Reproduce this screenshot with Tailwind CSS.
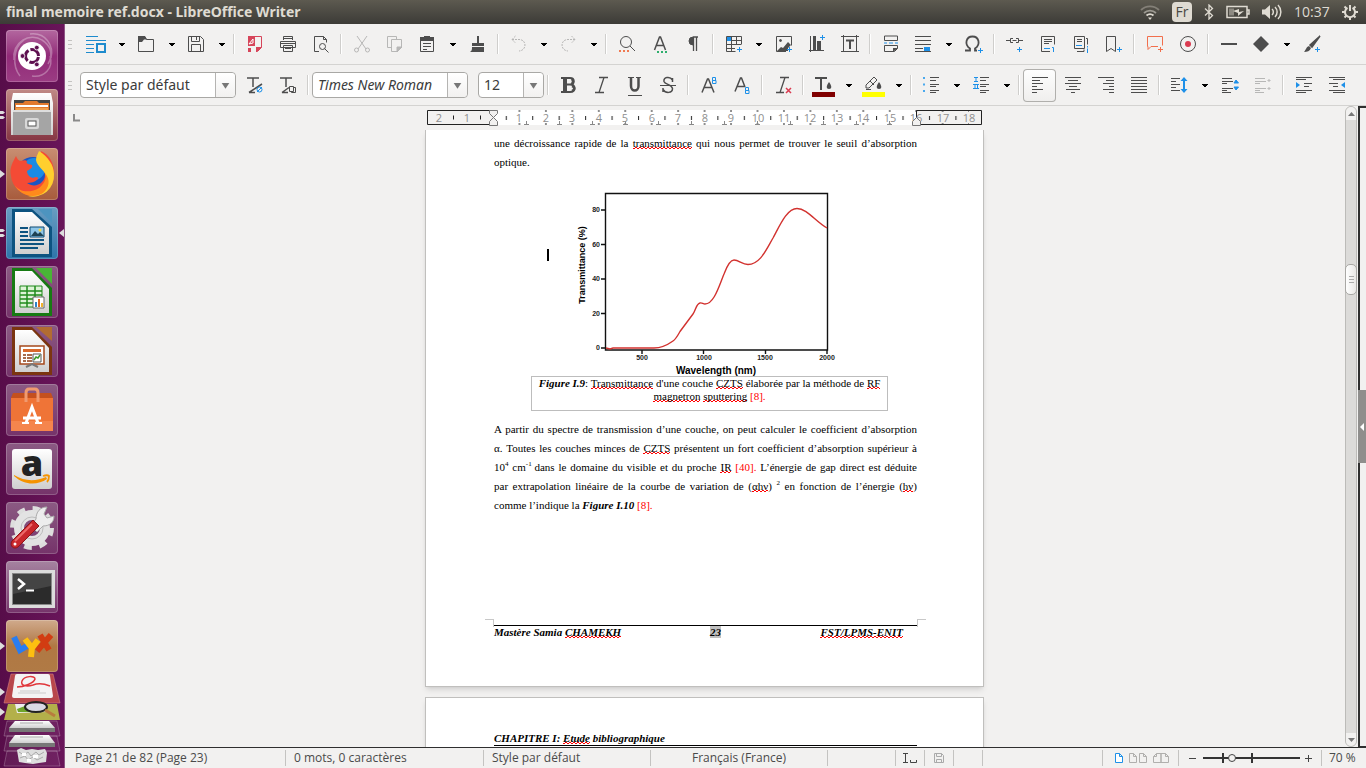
<!DOCTYPE html>
<html lang="fr">
<head>
  <meta charset="UTF-8">
  <meta name="viewport" content="width=device-width, initial-scale=1.0">
  <title>final memoire ref.docx - LibreOffice Writer</title>
  <script src="https://cdn.jsdelivr.net/npm/@tailwindcss/browser@4"></script>
</head>
<body class="h-screen overflow-hidden flex flex-col bg-[#f2f1f0] text-[#3c3c3c] font-['Open_Sans','Noto_Sans',sans-serif]">

  <!-- Shared symbols -->
  <svg class="absolute size-0" aria-hidden="true">
    <symbol id="caret" viewBox="0 0 17 24"><path d="M6 11h6v1h-1v1h-1v1H8v-1H7v-1H6z" fill="#000"/></symbol>
    <symbol id="combo" viewBox="0 0 20 24"><path d="M6 10h8l-4 6z" fill="#777"/></symbol>
    <symbol id="run" viewBox="0 0 6 10"><path d="M0 1l5 4-5 4z" fill="#ddd"/></symbol>
    <symbol id="runs" viewBox="0 0 6 10"><path d="M0 1h3l2 1.500-2 1.500H0zM0 6h3l2 1.500L3 9H0z" fill="#ddd"/></symbol>
    <linearGradient id="shine" x1="0" y1="0" x2="0" y2="1"><stop offset="0" stop-color="#fff"/><stop offset="1" stop-color="#cfcfcf"/></linearGradient>
  </svg>

  <!-- Top panel -->
  <header class="h-6 shrink-0 flex items-center justify-between pl-[6px] pr-2 bg-linear-to-b from-[#5d5a50] to-[#3c3b37] text-[#dfdbd2]">
    <h1 class="text-[14px] leading-6 font-bold font-['Noto_Sans',sans-serif]">final memoire ref.docx - LibreOffice Writer</h1>
    <div class="flex items-center gap-3">
      <svg class="w-5 h-5" viewBox="0 0 20 20" fill="none" stroke="#dfdbd2" stroke-width="1.800">
        <path d="M1 8a13 13 0 0 1 18 0" opacity=".35"/><path d="M4 11a9 9 0 0 1 12 0" opacity=".55"/><path d="M6.500 13.500a5.500 5.500 0 0 1 7 0"/><path d="M8 15.500h4L10 18z" fill="#dfdbd2" stroke="none"/>
      </svg>
      <span class="w-5 h-5 rounded-sm bg-[#dfdbd2] text-[#4a4843] text-[14px] leading-5 text-center">Fr</span>
      <svg class="w-[10px] h-4" viewBox="0 0 10 16" fill="none" stroke="#dfdbd2" stroke-width="1.300"><path d="M1 4.500l7.500 7L5 15V1l3.500 3.500L1 11.500"/></svg>
      <svg class="w-6 h-4" viewBox="0 0 24 16" fill="none" stroke="#dfdbd2" stroke-width="1.500">
        <path d="M1 2.500h20v11H1zM21 6h2v4h-2"/><path d="M3 4.500h5v7H3z" fill="#8d8a82" stroke="none"/><path d="M7 7l6-2v3l5-1-6 5V9z" fill="#dfdbd2" stroke="none"/>
      </svg>
      <svg class="w-5 h-4" viewBox="0 0 20 16" fill="none" stroke="#dfdbd2" stroke-width="1.500">
        <path d="M0 5.500h3L8 1v14l-5-4.500H0z" fill="#dfdbd2" stroke="none"/><path d="M10 5a4 4 0 0 1 0 6M13 3a7 7 0 0 1 0 10M16 1a10 10 0 0 1 0 14"/>
      </svg>
      <time class="w-9 text-[14px] leading-6">10:37</time>
      <svg class="size-4" viewBox="0 0 16 16" fill="none" stroke="#dfdbd2">
        <path d="M10.500 3.800a5 5 0 1 1-5 0" stroke-width="2"/><path d="M8 1v6" stroke-width="2"/>
        <path d="M2.500 2.500l2 2M13.500 2.500l-2 2M0 8h3M13 8h3M2.500 13.500l2-2M13.500 13.500l-2-2M8 13v3" stroke-width="2"/>
      </svg>
    </div>
  </header>

  <div class="flex-1 min-h-0 flex">

    <!-- Launcher -->
    <nav class="w-[65px] shrink-0 flex flex-col pt-[6px] bg-linear-to-r from-[#570d49] to-[#69155a] border-r border-[#8d5484] overflow-hidden">
      <ul class="flex flex-col gap-[7px] [&>li]:relative [&>li]:h-[52px] [&_button]:block [&_button]:ml-[6px] [&_button]:size-[52px] [&_button]:rounded-[4px] [&_button]:inset-ring [&_button]:inset-ring-white/20 [&_button>svg]:size-[52px] [&_button>svg]:overflow-visible">
        <li><button aria-label="Dash" class="bg-linear-to-b from-[#b3679f] via-[#912a78] to-[#9b3c83]">
          <svg viewBox="0 0 52 52" fill="none">
            <path d="M8 30C6 12 24 2 36 10c8 5 12 14 6 24M14 46C6 36 7 18 18 10M44 26c4 12-6 22-18 20M24 4c16-2 24 12 21 24" stroke="#fff" stroke-opacity=".3" stroke-width="1.500"/>
            <circle cx="26" cy="26" r="14" fill="#fff"/>
            <circle cx="26" cy="26" r="6.500" stroke="#5e1050" stroke-width="3" stroke-dasharray="11.600 2" stroke-dashoffset="-1"/>
            <g fill="#5e1050" stroke="#fff" stroke-width=".8"><circle cx="16.500" cy="26" r="2.400"/><circle cx="30.800" cy="17.600" r="2.400"/><circle cx="30.800" cy="34.400" r="2.400"/></g>
          </svg></button></li>
        <li><svg class="absolute left-0 top-[21px] w-[6px] h-[10px]"><use href="#runs"/></svg>
          <button aria-label="Fichiers" class="bg-linear-to-b from-[#c08a86] to-[#853543]">
          <svg viewBox="0 0 52 52">
            <path d="M7 4h38l2 10v32H5V14z" fill="url(#shine)"/><path d="M8 11h36v12H8z" fill="#444"/>
            <path d="M9 14h8l2-2h12l2 2h10v9H9z" fill="#e27a2e"/><path d="M10 16h32v2H10z" fill="#fff"/><path d="M10 19h32v3H10z" fill="#f0a04e"/>
            <path d="M7 21h38v25H7z" fill="#a5a5a5"/><path d="M7 21h38v2H7z" fill="#ddd"/><rect x="19" y="29" width="14" height="11" rx="2" fill="#d8d8d8"/><rect x="22" y="32" width="8" height="5" fill="#fff" stroke="#555"/>
          </svg></button></li>
        <li><svg class="absolute left-0 top-[21px] w-[6px] h-[10px]"><use href="#run"/></svg>
          <button aria-label="Firefox" class="bg-linear-to-b from-[#c88e72] to-[#a75b3c]">
          <svg viewBox="0 0 52 52">
            <circle cx="27" cy="26" r="17" fill="#1a55c4"/><circle cx="28" cy="21" r="11" fill="#1b8be4"/>
            <path d="M10 8c1 3 3 5 5 5 2-1 5-1 6 0-1 2 0 3 5 4 1 3-2 4-5 6 0 3 2 6 6 7 3-2 6-1 5 1-3 3-7 4-11 4 8 6 18 0 18-8 0-6-6-9-6-15 0-5 3-8 2-9 9 4 13 13 13 21a21 21 0 0 1-43 4C3 20 7 14 10 8z" fill="#f44b35"/>
            <path d="M33 3c9 6 15 14 15 23a21 21 0 0 1-26 22c12-2 19-9 18-20-1-6-9-9-10-16 0-4 2-6 3-9z" fill="#ffcf2e"/>
            <path d="M8 36c5 9 17 9 25 4 5-4 8-9 6-15 6 7 4 15-2 20-9 6-23 3-29-9z" fill="#ff8a1c"/>
          </svg></button></li>
        <li><svg class="absolute left-0 top-[21px] w-[6px] h-[10px]"><use href="#runs"/></svg>
          <svg class="absolute right-0 top-[21px] w-[6px] h-[10px]" viewBox="0 0 6 10"><path d="M6 1L1 5l5 4z" fill="#ddd"/></svg>
          <button aria-label="LibreOffice Writer" class="bg-linear-to-b from-[#6a9dc2] to-[#2c75aa]">
          <svg viewBox="0 0 52 52">
            <path d="M6 2h20l20 18v30H6z" fill="#0d5380"/><path d="M32 2h14v14z" fill="#4d94bf"/><path d="M9 5h17l17 16v26H9z" fill="url(#shine)"/>
            <path d="M14 21h8M14 25h8M14 29h8M14 33h24M14 37h24M14 41h18" stroke="#0d5380" stroke-width="2"/>
            <path d="M24 20h14v10H24z" fill="#8ec6e8" stroke="#0d4a72"/><path d="M25 29l4-5 3 3 2-2 4 4z" fill="#1d4252"/><circle cx="34" cy="23" r="1.500" fill="#f6d743"/>
          </svg></button></li>
        <li><button aria-label="LibreOffice Calc" class="bg-linear-to-b from-[#8b5a83] to-[#75336a]">
          <svg viewBox="0 0 52 52">
            <path d="M6 2h20l20 20v28H6z" fill="#177a13"/><path d="M30 2h16v16z" fill="#49b536"/><path d="M9 5h17l17 18v24H9z" fill="url(#shine)"/>
            <path d="M14 20h22v21H14z" fill="#ddf3d6" stroke="#1f8a1b"/><path d="M14 25h22M14 29h22M14 33h22M14 37h22M21 20v21M29 20v21" stroke="#1f8a1b" stroke-width="1.500"/>
            <path d="M27 31h11v11H27z" fill="#fff" stroke="#666"/><path d="M29 36h2v5h-2z" fill="#2f80c8"/><path d="M32 33h2v8h-2z" fill="#e2661e"/><path d="M35 37h2v4h-2z" fill="#f0b32c"/>
          </svg></button></li>
        <li><button aria-label="LibreOffice Impress" class="bg-linear-to-b from-[#8b5a83] to-[#75336a]">
          <svg viewBox="0 0 52 52">
            <path d="M6 2h20l20 20v28H6z" fill="#7b3510"/><path d="M30 2h16v14z" fill="#b26c31"/><path d="M9 5h17l17 18v24H9z" fill="url(#shine)"/>
            <path d="M14 21h24v18H14z" fill="#fff" stroke="#a5481b" stroke-width="1.500"/><path d="M17 24h18v3H17z" fill="#d9692b"/><path d="M17 30h3M17 33h3M17 36h3M21 30h5M21 33h5M21 36h5" stroke="#8a3d13" stroke-width="1.500"/><path d="M27 29h8v8h-8z" fill="#fff" stroke="#555"/><path d="M28 35l2-3 2 1 2-3" stroke="#3a9b2a" stroke-width="1.500" fill="none"/><path d="M20 42l6-3 6 3" stroke="#777" stroke-width="2" fill="none"/>
          </svg></button></li>
        <li><button aria-label="Logiciels" class="bg-linear-to-b from-[#8b5a83] to-[#75336a]">
          <svg viewBox="0 0 52 52">
            <path d="M7 9l-2 5h42l-2-5z" fill="#c4501e"/><path d="M5 14h42v33H5z" fill="#ef7437"/><path d="M5 37h42v10H5z" fill="#f5854d"/>
            <path d="M20 18V9q0-4 3-4h6q3 0 3 4v9" fill="none" stroke="#f09a70" stroke-width="3"/>
            <path d="M20 39l6-16 6 16M17 34h18" fill="none" stroke="#fff" stroke-width="3"/><path d="M16 39h7M29 39h7" stroke="#fff" stroke-width="2"/>
          </svg></button></li>
        <li><button aria-label="Amazon" class="bg-linear-to-b from-[#8b5a83] to-[#75336a]">
          <svg viewBox="0 0 52 52">
            <rect x="6" y="6" width="40" height="40" rx="3" fill="url(#shine)"/>
            <text x="26" y="33" text-anchor="middle" font-family="Open Sans, sans-serif" font-weight="800" font-size="36" fill="#222">a</text>
            <path d="M8 33c11 10 24 9 33 3l-1-2c-9 4-21 5-32-2z" fill="#f59300"/><path d="M37 33c3-1 5-1 6 0 0 2 0 4-2 6" fill="none" stroke="#f59300" stroke-width="1.800"/>
          </svg></button></li>
        <li><button aria-label="Paramètres système" class="bg-linear-to-b from-[#8b5a83] to-[#75336a]">
          <svg viewBox="0 0 52 52">
            <circle cx="26" cy="26" r="19.500" fill="none" stroke="#ddd" stroke-width="5" stroke-dasharray="7.660 7.660"/>
            <circle cx="26" cy="26" r="13" fill="none" stroke="#e3e3e3" stroke-width="10"/><circle cx="26" cy="26" r="11" fill="none" stroke="#bdbdbd"/>
            <path d="M30 17c0-7 4-12 11-12l-3 7 3 4 7-2c0 7-5 10-11 10l-6 6-6-6z" fill="#ededed" stroke="#aaa"/>
            <path d="M27 18l6 6-21 21c-4 3-9-1-6-6z" fill="#c9272c" stroke="#8f1519"/><path d="M26 22L9 39" stroke="#ee6a6a" stroke-width="2"/><circle cx="9" cy="42" r="1.500" fill="#fff"/>
          </svg></button></li>
        <li><button aria-label="Terminal" class="bg-linear-to-b from-[#a583a0] to-[#75336a]">
          <svg viewBox="0 0 52 52">
            <path d="M3 9h46v38H3z" fill="#dcdcdc"/><path d="M6 12h40v32H6z" fill="#888"/><path d="M7 13h38v30H7z" fill="#2b2b2b"/><path d="M7 13h38v12L7 33z" fill="#444"/>
            <path d="M12 18l6 5-6 5" fill="none" stroke="#fff" stroke-width="2.500"/><path d="M20 29.500h8" stroke="#fff" stroke-width="2"/>
          </svg></button></li>
        <li><svg class="absolute left-0 top-[21px] w-[6px] h-[10px]"><use href="#run"/></svg>
          <button aria-label="LyX" class="bg-linear-to-b from-[#d0aa8c] via-[#b07843] to-[#b07a45]">
          <svg viewBox="0 0 52 52" fill="none" stroke-width="6">
            <path d="M8 17l6 13 7-4" stroke="#2a7df0"/><path d="M34 15l9 15M45 15L31 31" stroke="#d23c12"/><path d="M19 19l7 9 6-8M26 27l-1 10" stroke="#fdbf10"/>
          </svg></button></li>
      </ul>
      <!-- Folded part of the launcher -->
      <svg class="w-16 h-[95px] shrink-0 mt-px" viewBox="0 0 64 95">
        <path d="M11 1h42l7 29H4z" fill="#b8474b" stroke="#d08084" stroke-opacity=".6"/>
        <path d="M15 3q0-2 2-2h31q2 0 2 2l3 20q0 2-2 2H14q-2 0-2-2z" fill="#f4f4f4"/>
        <path d="M17 14c7 0 17-4 18-8 0-4-11-3-13 2-2 5 5 6 11 4 5-2 12-1 17 1" fill="none" stroke="#e0383c" stroke-width="1.500"/>
        <path d="M18 20h28M20 18h20" stroke="#ccc"/>
        <path d="M8 31h49l3 16H4z" fill="#b3b04a"/><path d="M15 31h30l2 8-30 1z" fill="#eee"/><path d="M17 36l8-3 6 6H18z" fill="#6fa52b"/><ellipse cx="36" cy="34" rx="11" ry="5" fill="#ccd" fill-opacity=".6" stroke="#222" stroke-width="2"/><path d="M45 37l10 6" stroke="#b87c3e" stroke-width="3"/>
        <path d="M7 48h50l3 15H4zM7 63h50l3 15H4zM7 78h50l3 15H4z" fill="#fff" fill-opacity=".06" stroke="#fff" stroke-opacity=".22"/>
        <path d="M15 48h34l6 7H9z" fill="url(#shine)"/><path d="M9 55h46v4H9z" fill="#777"/><path d="M20 50h23" stroke="#aaa"/>
        <path d="M15 62h34l6 8H9z" fill="url(#shine)"/><path d="M9 70h46v4H9z" fill="#777"/><path d="M20 64h23" stroke="#aaa"/>
        <path d="M17 77l4-2 5 2 6-1 6 1 7-1 2 4-1 9-7 1-6 1-8-1-6-1z" fill="#dedede"/><path d="M19 79l5 3 4-3 3 4 5-4 3 3 5-3M20 85l5-2 3 4 5-3 4 3 6-3" fill="none" stroke="#aaa"/><path d="M22 80h4v3h-4zM33 82h5v3h-5zM27 86h4v3h-4z" fill="#fff"/>
        <path d="M0 15l5 4-5 4zM0 35l5 4-5 4z" fill="#ddd"/>
      </svg>
    </nav>

    <!-- Writer window -->
    <main class="flex-1 min-w-0 flex flex-col">

      <!-- Standard toolbar -->
      <div role="toolbar" aria-label="Standard" class="h-[41px] shrink-0 flex items-center pl-[3px] border-b border-[#d4d3d1] [&>button]:h-8 [&>button]:w-[33px] [&>button]:pl-[5px] [&>button]:shrink-0 [&>button>svg]:size-6 [&>button>svg]:fill-none [&>button>svg]:stroke-[#4d4d4d] [&>.drop]:w-[17px] [&>.drop]:pl-0 [&>.drop>svg]:w-[17px] [&>.drop>svg]:stroke-none [&>hr]:mx-[3px] [&>hr]:h-5 [&>hr]:w-[2px] [&>hr]:shrink-0 [&>hr]:border-0 [&>hr]:border-l [&>hr]:border-r [&>hr]:border-l-[#cfcecc] [&>hr]:border-r-white">
        <svg class="w-3 h-6 shrink-0" viewBox="0 0 12 24"><path d="M0 8.500h4M0 12.500h4M0 16.500h4" stroke="#c4c3c1"/></svg>
        <button aria-label="Styles"><svg viewBox="0 0 24 24"><path d="M1 4.500h12M1 8.500h20M1 12.500h8M1 16.500h8M1 20.500h8" stroke="#1e8bcd"/><path d="M12 12h8v8h-8z" stroke="#1e8bcd" stroke-width="2"/></svg></button>
        <button class="drop" aria-label="Options des styles"><svg><use href="#caret"/></svg></button>
        <button aria-label="Ouvrir"><svg viewBox="0 0 24 24"><path d="M3.500 4.500h6l2 3h7v12h-15z"/><path d="M3 4h7l2 3.500H9L7 10H3z" fill="#4d4d4d" stroke="none"/></svg></button>
        <button class="drop" aria-label="Fichiers récents"><svg><use href="#caret"/></svg></button>
        <button aria-label="Enregistrer"><svg viewBox="0 0 24 24"><path d="M3.500 4.500h12l3 3v12h-15zM6.500 4.500v5h8v-5M11.500 5v3M6.500 19v-6.500h9V19"/></svg></button>
        <button class="drop" aria-label="Options d'enregistrement"><svg><use href="#caret"/></svg></button>
        <hr>
        <button aria-label="Exporter en PDF"><svg viewBox="0 0 24 24"><path d="M6.500 4.500h12v11l-4 4" stroke="#d6455a"/><path d="M5 4h7v10H5zM5 16h3v4H5zM13 15h6l-5 5h-1z" fill="#d6455a" stroke="none"/><path d="M6 12l4-5v4z" stroke="#fff"/></svg></button>
        <button aria-label="Imprimer"><svg viewBox="0 0 24 24"><path d="M7.500 8V4.500h9V8M4.500 9.500h15v6h-15zM7.500 13.500h9v6h-9zM9 16.500h6M8 6.500h8M5 11.500h14"/></svg></button>
        <button aria-label="Aperçu"><svg viewBox="0 0 24 24"><path d="M10 19.500H5.500v-15h9l3 3v3M14.500 4.500v3h3"/><circle cx="13.500" cy="14.500" r="3"/><path d="M15.500 16.500l4 4"/></svg></button>
        <hr>
        <button aria-label="Couper" class="opacity-35"><svg viewBox="0 0 24 24"><path d="M7 4l9 13M17 4L8 17"/><circle cx="6.500" cy="18" r="2"/><circle cx="17.500" cy="18" r="2"/></svg></button>
        <button aria-label="Copier" class="opacity-35"><svg viewBox="0 0 24 24"><path d="M8 15.500H4.500v-11h9V7M8.500 7.500h10v8l-4 4h-6z"/><path d="M14 15h5l-5 5z" fill="#4d4d4d"/></svg></button>
        <button aria-label="Coller"><svg viewBox="0 0 24 24"><path d="M4.500 6.500h13v13h-13z"/><path d="M4 5h4V4h6v1h4v4H4z" fill="#4d4d4d" stroke="none"/><path d="M7 11.500h8M7 14.500h8M7 17.500h4"/></svg></button>
        <button class="drop" aria-label="Options de collage"><svg><use href="#caret"/></svg></button>
        <button aria-label="Cloner le formatage"><svg viewBox="0 0 24 24"><path d="M11 4h2v7h5v3H6v-3h5zM6 15h12v5H4c2-1 2-3 2-5z" fill="#4d4d4d" stroke="none"/></svg></button>
        <hr>
        <button aria-label="Annuler" class="opacity-35"><svg viewBox="0 0 24 24"><path d="M5 7.500h7c8 0 8 11 0 11.500M8.500 4L5 7.500 8.500 11" stroke-dasharray="2 1"/></svg></button>
        <button class="drop" aria-label="Actions à annuler"><svg><use href="#caret"/></svg></button>
        <button aria-label="Rétablir" class="opacity-35"><svg viewBox="0 0 24 24"><path d="M18 7.500h-7c-8 0-8 11 0 11.500M14.500 4L18 7.500 14.500 11" stroke-dasharray="2 1"/></svg></button>
        <button class="drop" aria-label="Actions à rétablir"><svg><use href="#caret"/></svg></button>
        <hr>
        <button aria-label="Rechercher"><svg viewBox="0 0 24 24"><circle cx="11" cy="10" r="5.500"/><path d="M15 14l5 5"/><path d="M4 19h2M8 19h2M12 19h2" stroke="#f07a52" stroke-width="2"/></svg></button>
        <button aria-label="Orthographe"><svg viewBox="0 0 24 24"><path d="M6.500 18l5-13h1l5 13M8 13.500h8" stroke-width="1.500"/><path d="M9 20h2M13 20h2M17 20h2" stroke="#2fae6d" stroke-width="2"/></svg></button>
        <button aria-label="Marques de formatage"><svg viewBox="0 0 24 24"><path d="M12 5h5M12.500 5v14M15.500 5v14" stroke-width="1.300"/><path d="M12 5v8a4 4 0 0 1 0-8z" fill="#4d4d4d"/></svg></button>
        <hr>
        <button aria-label="Tableau"><svg viewBox="0 0 24 24"><path d="M4.500 4.500h15v8M4.500 4.500v15h9M4 8.500h15M4 12.500h15M4 16.500h9M9.500 4.500v15M14.500 4.500v8"/><path d="M5 5h4v4H5z" fill="#1e90e8" stroke="none"/><path d="M17.500 15v5M15 17.500h5" stroke="#1e90e8"/></svg></button>
        <button class="drop" aria-label="Insérer un tableau"><svg><use href="#caret"/></svg></button>
        <button aria-label="Image"><svg viewBox="0 0 24 24"><path d="M14 19.500H4.500v-15h15v9"/><circle cx="8.500" cy="8.500" r="1" fill="#4d4d4d"/><path d="M5 19l4-4 2 1 5-6 3 3-3 3v3z" fill="#4d4d4d" stroke="none"/><path d="M17.500 15v5M15 17.500h5" stroke="#1e90e8"/></svg></button>
        <button aria-label="Diagramme"><svg viewBox="0 0 24 24"><path d="M5.500 4v16M4 18.500h15"/><path d="M8 4h3v14H8zM12 9h4v9h-4z" fill="#4d4d4d" stroke="none"/><path d="M17.500 3v5M15 5.500h5" stroke="#1e90e8"/></svg></button>
        <button aria-label="Zone de texte"><svg viewBox="0 0 24 24"><path d="M5.500 3v17M18.500 3v17M3 4.500h18M3 19.500h18"/><path d="M8 8.500h8M12 8v9" stroke-width="2"/></svg></button>
        <hr>
        <button aria-label="Saut de page"><svg viewBox="0 0 24 24"><path d="M5.500 4v4.500h13V4zM5.500 19.500v-6h13v3l-3 3z"/><path d="M5 11h3M10 11h4M16 11h3" stroke="#1e90e8"/><path d="M14 16h5l-5 4z" fill="#4d4d4d" stroke="none"/></svg></button>
        <button aria-label="Champ"><svg viewBox="0 0 24 24"><path d="M3 4.500h16M3 8.500h16M3 12.500h16M3 16.500h8M3 19.500h16"/><path d="M12 15h6v4h-6z" fill="#1e90e8" stroke="none"/></svg></button>
        <button class="drop" aria-label="Autres champs"><svg><use href="#caret"/></svg></button>
        <button aria-label="Caractères spéciaux"><svg viewBox="0 0 24 24"><path d="M3 18.500h5v-2c-6-4-4-12 2.500-12s8.500 8 2.500 12v2h2" stroke-width="1.800"/><path d="M18.500 16v5M16 18.500h5" stroke="#1e90e8"/></svg></button>
        <hr>
        <button aria-label="Hyperlien"><svg viewBox="0 0 24 24"><path d="M3 8.500h4M10 6.500H7.500v4H10M13 6.500h2.500v4H13M16 8.500h4M9.500 8.500h4"/><path d="M16.500 15v5M14 17.500h5" stroke="#1e90e8"/></svg></button>
        <button aria-label="Note de bas de page"><svg viewBox="0 0 24 24"><path d="M14 19.500H5.500v-15h13v8M8 7.500h8M8 9.500h8M8 11.500h5"/><path d="M8 16.500h6M16 15.500h1.500V20" stroke="#1e90e8"/></svg></button>
        <button aria-label="Note de fin"><svg viewBox="0 0 24 24"><path d="M5.500 4.500h10v12h-10zM17 6.500h1.500v6M8 7.500h5M8 9.500h5M8 19.500h7v-2"/><path d="M7 13.500h6M18.500 14v1.500M18.500 16.500V21" stroke="#1e90e8"/></svg></button>
        <button aria-label="Repère de texte"><svg viewBox="0 0 24 24"><path d="M4.500 19.500v-15h9v15l-4.500-3z"/><path d="M17.500 15v5M15 17.500h5" stroke="#1e90e8"/></svg></button>
        <hr>
        <button aria-label="Commentaire"><svg viewBox="0 0 24 24"><path d="M15 14.500H8l-3 3v-3h-.500v-10h15v9M17.500 15v5M15 17.500h5" stroke="#f26f4c"/></svg></button>
        <button aria-label="Suivi des modifications"><svg viewBox="0 0 24 24"><circle cx="12" cy="12" r="7.500"/><circle cx="12" cy="12" r="3" fill="#da3b50" stroke="none"/></svg></button>
        <hr>
        <button aria-label="Ligne"><svg viewBox="0 0 24 24"><path d="M4 12h16" stroke-width="2"/></svg></button>
        <button aria-label="Formes"><svg viewBox="0 0 24 24"><path d="M11 4l8 8-8 8-8-8z" fill="#4d4d4d" stroke="none"/></svg></button>
        <button class="drop" aria-label="Autres formes"><svg><use href="#caret"/></svg></button>
        <button aria-label="Fonctions de dessin"><svg viewBox="0 0 24 24"><path d="M20 4l-8 11-2-2z" fill="#4d4d4d" stroke-width="1.500"/><path d="M9 14l2 2c-1 3-4 4-7 4 2-2 2-5 5-6z" fill="#4d4d4d" stroke="none"/><path d="M17.500 15v5M15 17.500h5" stroke="#1e90e8"/></svg></button>
      </div>

      <!-- Formatting toolbar -->
      <div role="toolbar" aria-label="Formatage" class="h-[41px] shrink-0 flex items-center pl-[3px] border-b border-[#d4d3d1] [&>button]:h-[33px] [&>button]:w-[33px] [&>button]:pl-[5px] [&>button]:shrink-0 [&>button>svg]:size-6 [&>button>svg]:fill-none [&>button>svg]:stroke-[#4d4d4d] [&>.drop]:w-[17px] [&>.drop]:pl-0 [&>.drop>svg]:w-[17px] [&>.drop>svg]:stroke-none [&>hr]:mx-[3px] [&>hr]:h-5 [&>hr]:w-[2px] [&>hr]:shrink-0 [&>hr]:border-0 [&>hr]:border-l [&>hr]:border-r [&>hr]:border-l-[#cfcecc] [&>hr]:border-r-white">
        <svg class="w-3 h-6 shrink-0" viewBox="0 0 12 24"><path d="M0 8.500h4M0 12.500h4M0 16.500h4" stroke="#c4c3c1"/></svg>
        <div class="relative w-[156px] mr-[2px] shrink-0">
          <select aria-label="Style de paragraphe" class="appearance-none w-full h-[26px] pl-[5px] rounded-[4px] border border-[#a9a8a5] bg-white text-[14px] leading-5 font-['Noto_Sans',sans-serif]"><option>Style par défaut</option></select>
          <svg class="absolute right-px top-px w-5 h-6 bg-linear-to-b from-white to-[#f2f1f0] border-l border-[#b5b4b2] rounded-r-[4px] pointer-events-none"><use href="#combo"/></svg>
        </div>
        <button aria-label="Actualiser le style"><svg viewBox="0 0 24 24"><path d="M4 5h12M10 5v9M6 19.500h6M6 19.500L19 11" stroke-width="1.500"/><circle cx="16.500" cy="16.500" r="2.500" stroke="#1e90e8"/><path d="M14 19l5-5" stroke="#1e90e8"/></svg></button>
        <button aria-label="Nouveau style"><svg viewBox="0 0 24 24"><path d="M4 5h12M10 5v9M6 19.500h6M6 19.500l7-5" stroke-width="1.500"/><path d="M13.500 13.500h4v5h-4zM15.500 18.500v1h4v-5h-2"/></svg></button>
        <hr>
        <div class="relative w-[156px] mr-[10px] shrink-0">
          <select aria-label="Nom de la police" class="appearance-none w-full h-[26px] pl-[5px] rounded-[4px] border border-[#a9a8a5] bg-white text-[14px] leading-5 font-['Noto_Sans',sans-serif] italic"><option>Times New Roman</option></select>
          <svg class="absolute right-px top-px w-5 h-6 bg-linear-to-b from-white to-[#f2f1f0] border-l border-[#b5b4b2] rounded-r-[4px] pointer-events-none"><use href="#combo"/></svg>
        </div>
        <div class="relative w-[66px] shrink-0">
          <select aria-label="Taille de police" class="appearance-none w-full h-[26px] pl-[5px] rounded-[4px] border border-[#a9a8a5] bg-white text-[14px] leading-5 font-['Noto_Sans',sans-serif]"><option>12</option></select>
          <svg class="absolute right-px top-px w-5 h-6 bg-linear-to-b from-white to-[#f2f1f0] border-l border-[#b5b4b2] rounded-r-[4px] pointer-events-none"><use href="#combo"/></svg>
        </div>
        <hr>
        <button aria-label="Gras"><svg viewBox="0 0 24 24"><path d="M4 5h9M4 19h9M13 5c5 0 5 6.500 0 6.500H9M13 11.500c6 0 6 7.500 0 7.500" stroke-width="2"/><path d="M6 4h4v16H6z" fill="#4d4d4d" stroke="none"/><path d="M14.500 6c2 1 2 4 0 5M15 13c3 1 3 4 0 5" stroke-width="2.500"/></svg></button>
        <button aria-label="Italique"><svg viewBox="0 0 24 24"><path d="M9 4.500h9M5 19.500h9M14 4.500l-5 15" stroke-width="1.300"/></svg></button>
        <button aria-label="Souligné"><svg viewBox="0 0 24 24"><path d="M5 4.500h6M13 4.500h5M5 22.500h14"/><path d="M8 4v9c0 6 7.500 6 7.500 0V4" stroke-width="2.500"/></svg></button>
        <button aria-label="Barré"><svg viewBox="0 0 24 24"><path d="M16.500 9V5M16.500 7C14 3 7 4 8 8.500c1 3 8 3 8.500 7 0 5-7 5-9.500 1M7 19v-4" stroke-width="1.500"/><path d="M4 12.500h16"/></svg></button>
        <hr>
        <button aria-label="Exposant"><svg viewBox="0 0 24 24"><path d="M5 19.500L10.500 6h1L17 19.500M7 14.500h8" stroke-width="1.500"/><path d="M15.500 4.500h3v3h-3zM15.500 7.500h3.500v3h-3.500z" stroke="#1e90e8"/></svg></button>
        <button aria-label="Indice"><svg viewBox="0 0 24 24"><path d="M5 18.500L10.500 5h1L15 14M7 13.500h8" stroke-width="1.500"/><path d="M15.500 14.500h3v3h-3zM15.500 17.500h3.500v3h-3.500z" stroke="#1e90e8"/></svg></button>
        <hr>
        <button aria-label="Effacer le formatage"><svg viewBox="0 0 24 24"><path d="M9 4.500h9M5 19.500h8M14 4.500l-5 15" stroke-width="1.300"/><path d="M15 15l5 5M20 15l-5 5" stroke="#da3b50" stroke-width="1.500"/></svg></button>
        <hr>
        <button aria-label="Couleur de police"><svg viewBox="0 0 24 24"><path d="M3 5h12M9 5v12" stroke-width="2"/><path d="M17 9c3 4 3 7 0 7s-3-3 0-7z" fill="#4d4d4d" stroke="none"/><path d="M0 19h23v5H0z" fill="#800000" stroke="none"/></svg></button>
        <button class="drop" aria-label="Choisir la couleur"><svg><use href="#caret"/></svg></button>
        <button aria-label="Surlignage"><svg viewBox="0 0 24 24"><path d="M4 15v-3l8-8 3 3-8 8zM8 8l4 4M4 16.500h5"/><path d="M17 9c3 4 3 7 0 7s-3-3 0-7z" fill="#4d4d4d" stroke="none"/><path d="M0 19h23v5H0z" fill="#ff0" stroke="none"/></svg></button>
        <button class="drop" aria-label="Choisir le surlignage"><svg><use href="#caret"/></svg></button>
        <hr>
        <button aria-label="Puces"><svg viewBox="0 0 24 24"><path d="M3 5h2M3 11.500h2M3 18h2" stroke="#4aa9ee" stroke-width="2"/><path d="M10 4.500h9M10 7.500h6M10 11.500h9M10 13.500h6M10 17.500h9M10 19.500h6"/></svg></button>
        <button class="drop" aria-label="Autres puces"><svg><use href="#caret"/></svg></button>
        <button aria-label="Numérotation"><svg viewBox="0 0 24 24"><path d="M4 4.500h4M6 4.500v4M4 8.500h4M3 11.500h6M3 15.500h6M5 11.500v4M7.500 11.500v4" stroke="#1e90e8"/><path d="M10 4.500h9M10 7.500h6M10 11.500h9M10 13.500h6M10 17.500h9M10 19.500h6"/></svg></button>
        <button class="drop" aria-label="Autres numérotations"><svg><use href="#caret"/></svg></button>
        <hr>
        <button aria-label="Aligner à gauche" aria-pressed="true" class="rounded-[4px] inset-ring inset-ring-[#b0afac] bg-linear-to-b from-[#fefefe] to-[#efeeed]"><svg viewBox="0 0 24 24"><path d="M4 4.500h16M4 7.500h8M4 10.500h11M4 13.500h5M4 16.500h11M4 19.500h5"/></svg></button>
        <button aria-label="Centrer"><svg viewBox="0 0 24 24"><path d="M4 4.500h16M7 7.500h10M4 10.500h16M8 13.500h8M5 16.500h14M10 19.500h4"/></svg></button>
        <button aria-label="Aligner à droite"><svg viewBox="0 0 24 24"><path d="M4 4.500h16M12 7.500h8M9 10.500h11M15 13.500h5M9 16.500h11M15 19.500h5"/></svg></button>
        <button aria-label="Justifier"><svg viewBox="0 0 24 24"><path d="M4 4.500h16M4 7.500h16M4 10.500h16M4 13.500h16M4 16.500h16M4 19.500h16"/></svg></button>
        <hr>
        <button aria-label="Interligne"><svg viewBox="0 0 24 24"><path d="M3 5.500h9M3 8.500h5M3 11.500h9M3 14.500h5M3 17.500h9"/><path d="M16 7v10" stroke="#1e90e8" stroke-width="2"/><path d="M12.500 8L16 4l3.500 4zM12.500 16l3.500 4 3.500-4z" fill="#1e90e8" stroke="none"/></svg></button>
        <button class="drop" aria-label="Autres interlignes"><svg><use href="#caret"/></svg></button>
        <button aria-label="Augmenter l'espacement"><svg viewBox="0 0 24 24"><path d="M4 5.500h10M4 8.500h11M4 10.500h5M4 15.500h11M4 17.500h5M4 19.500h9"/><path d="M16 10l2-3 2.500 3zM16 14l2 3 2.500-3z" fill="#1e90e8" stroke="#1e90e8"/></svg></button>
        <button aria-label="Réduire l'espacement" class="opacity-35"><svg viewBox="0 0 24 24"><path d="M4 5.500h10M4 8.500h11M4 10.500h5M4 15.500h11M4 17.500h5M4 19.500h9"/><path d="M17 7h2v1h-2zM17 15h2v1h-2z"/></svg></button>
        <hr>
        <button aria-label="Augmenter le retrait"><svg viewBox="0 0 24 24"><path d="M4 4.500h16M4 6.500h10M12 10.500h8M12 13.500h5M4 17.500h16M4 19.500h10"/><path d="M4 9l4 3-4 3z" fill="#1e90e8" stroke="none"/></svg></button>
        <button aria-label="Diminuer le retrait"><svg viewBox="0 0 24 24"><path d="M4 4.500h16M8 6.500h12M4 10.500h9M8 13.500h5M4 17.500h16M8 19.500h12"/><path d="M20 9l-4 3 4 3z" fill="#1e90e8" stroke="none"/></svg></button>
      </div>

      <!-- Document, scrollbar and sidebar -->
      <div class="flex-1 min-h-0 flex border-b border-[#2f2f2f]">
        <div class="relative flex-1 min-w-0 overflow-hidden flex flex-col">

          <svg class="absolute left-2 top-2 w-2 h-2" viewBox="0 0 8 8"><path d="M1 0v6.500h6" fill="none" stroke="#8a8a8a" stroke-width="2"/></svg>

          <!-- Ruler -->
          <div class="h-6 shrink-0 flex justify-center pt-1">
            <svg class="w-[555px] h-5" viewBox="0 0 555 20" font-family="Open Sans, sans-serif" font-size="11" fill="#8f8f8f" text-anchor="middle">
              <defs>
                <pattern id="cm" x="66" y="0" width="26.450" height="16" patternUnits="userSpaceOnUse"><path d="M12.800 6h1v4h-1zM25.950 0h.500v2h-.500zM25.950 13h.500v2h-.500zM0 0h.500v2H0zM0 13h.500v2H0z" fill="#222"/></pattern>
                <pattern id="tabs" x="83" y="0" width="33" height="16" patternUnits="userSpaceOnUse"><path d="M16.500 11v3.500M14 14.500h5" stroke="#888" fill="none"/></pattern>
              </defs>
              <path d="M66 0h423v15H66z" fill="#fff"/>
              <path d="M66 .500H.500v14H66M489.500 14.500h65V.500h-65V8" fill="none" stroke="#222"/>
              <path d="M26 5.500h1v4h-1zM53 5.500h1v4h-1z" fill="#222"/>
              <path d="M72 0h470v15H72z" fill="url(#cm)"/>
              <path d="M84 0h395v16H84z" fill="url(#tabs)"/>
              <text x="12" y="12">2</text><text x="40" y="12">1</text>
              <text x="92" y="12">1</text><text x="119" y="12">2</text><text x="145" y="12">3</text><text x="172" y="12">4</text><text x="198" y="12">5</text><text x="225" y="12">6</text><text x="251" y="12">7</text><text x="278" y="12">8</text><text x="304" y="12">9</text><text x="331" y="12">10</text><text x="357" y="12">11</text><text x="383" y="12">12</text><text x="410" y="12">13</text><text x="436" y="12">14</text><text x="463" y="12">15</text><text x="489" y="12">16</text><text x="516" y="12">17</text><text x="542" y="12">18</text>
              <path d="M62.500 .500h8v3l-4 4-4-4zM62.500 15.500h8v-4l-4-4-4 4zM485.500 15.500h8v-4l-4-4-4 4z" fill="#f2f1f0" stroke="#777"/>
            </svg>
          </div>

          <!-- u marks the words that the spell checker underlines -->
          <div class="flex-1 min-h-0 overflow-hidden font-['Liberation_Serif',serif] text-[11px] leading-[19px] text-black [&_u]:no-underline [&_u]:bg-[linear-gradient(90deg,#f00_50%,transparent_50%),linear-gradient(90deg,transparent_50%,#f00_50%)] [&_u]:bg-size-[4px_1px] [&_u]:bg-repeat-x [&_u]:[background-position:0_100%,0_calc(100%-1px)] [&_b]:italic">
            <!-- Page 23 -->
            <article class="relative w-[559px] h-[557px] mx-auto pt-1 pl-[68px] pr-[66px] flex flex-col bg-white border border-t-0 border-[#c0bfbd] shadow-md">
              <p><span class="block [text-align-last:justify]">une décroissance rapide de la <u>transmittance</u> qui nous permet de trouver le seuil d’absorption</span>optique.</p>
              <span class="absolute left-[121px] top-[119px] w-[2px] h-3 bg-black"></span>

              <figure class="mt-4 ml-[37px] w-[357px]">
                <svg class="block w-[357px] h-[188px] overflow-hidden" viewBox="11 8 357 188" font-family="Liberation Sans, Arial, sans-serif" font-weight="700">
                  <path d="M85.500 13.500h222v156.500h-222z" fill="none" stroke="#111" stroke-width="1.400"/>
                  <path d="M81 30h4M81 64.500h4M81 99h4M81 133.500h4M81 168h4M122 170v4M183.500 170v4M245.500 170v4M307 170v4" stroke="#111" stroke-width="1.400"/>
                  <g font-size="7" fill="#222" text-anchor="end"><text x="80" y="32">80</text><text x="80" y="67">60</text><text x="80" y="101">40</text><text x="80" y="136">20</text><text x="80" y="170">0</text></g>
                  <g font-size="7" fill="#222" text-anchor="middle"><text x="122" y="180">500</text><text x="184" y="180">1000</text><text x="245" y="180">1500</text><text x="307" y="180">2000</text></g>
                  <text x="196" y="194" font-size="10" text-anchor="middle">Wavelength (nm)</text>
                  <text transform="translate(65 85) rotate(-90)" font-size="9" text-anchor="middle">Transmittance (%)</text>
                  <path d="M86 168L90 169L93 168H134C141 168 146 166 153 161C156 159 158 155 160 151.500L173 134C176 130 176 124 180 123C182 122.500 183 124 185 124C194 124 199 106 204 94C207 86 210 80 214 80C219 80 222 84.500 228 84.500C240 84.500 246 70 253 58C260 45 267 28.500 277 28.500C287 28.500 296 42 307 48" fill="none" stroke="#d2322f" stroke-width="1.400"/>
                </svg>
                <figcaption class="h-[35px] border border-[#bdbdbd] text-center leading-[13px] whitespace-nowrap"><b>Figure I.9</b>: <u>Transmittance</u> d'une couche <u>CZTS</u> élaborée par la méthode de <u>RF</u><br><u>magnetron</u> <u>sputtering</u> <span class="text-[#f00]">[8].</span></figcaption>
              </figure>

              <p class="mt-[9px] [&>span]:block [&>span]:[text-align-last:justify] [&_sup]:text-[7px] [&_sup]:-top-[5px]">
                <span>A partir du spectre de transmission d’une couche, on peut calculer le coefficient d’absorption</span>
                <span>α. Toutes les couches minces de <u>CZTS</u> présentent un fort coefficient d’absorption supérieur à</span>
                <span>10<sup>4</sup> cm<sup>-1 </sup>dans le domaine du visible et du proche <u>IR</u> <em class="not-italic text-[#f00]">[40].</em> L’énergie de gap direct est déduite</span>
                <span>par extrapolation linéaire de la courbe de variation de (<u>αhν</u>) <sup>2</sup> en fonction de l’énergie (<u>hν</u>)</span>
                comme l’indique la <b>Figure I.10</b> <em class="not-italic text-[#f00]">[8].</em>
              </p>

              <footer class="mt-auto mb-[47px] -mx-[9px] font-bold italic leading-[13px]">
                <div class="flex justify-between h-[6px]"><i class="w-[9px] h-2 border-t border-r border-[#c8c8c8]"></i><i class="w-[9px] h-2 border-t border-l border-[#c8c8c8]"></i></div>
                <div class="mx-[9px] border-t border-black grid grid-cols-[216px_1fr_auto] pr-[14px]"><span>Mastère Samia <u>CHAMEKH</u></span><span><mark class="bg-[#c0c0c0]">23</mark></span><span><u>FST/LPMS-ENIT</u></span></div>
              </footer>
            </article>

            <!-- Page 24 -->
            <article class="w-[559px] h-[400px] mx-auto mt-[10px] pt-[34px] pl-[68px] pr-[66px] bg-white border border-[#c0bfbd] shadow-md">
              <h2 class="border-b border-black font-bold italic leading-[13px]">CHAPITRE I: <u>Etude</u> bibliographique</h2>
            </article>
          </div>
        </div>

        <!-- Vertical scrollbar -->
        <div class="w-3 shrink-0 mx-px flex flex-col justify-between rounded-full bg-[#dcdbd9] border border-[#bcbbb8] relative">
          <button aria-label="Défiler vers le haut" class="h-[13px] rounded-t-full bg-[#f2f1f0] flex items-center justify-center"><svg class="w-[7px] h-1" viewBox="0 0 7 4"><path d="M0 4l3.500-4L7 4z" fill="#777"/></svg></button>
          <span class="absolute -inset-x-px top-[157px] h-[31px] rounded-[5px] border border-[#a9a8a5] bg-linear-to-r from-white to-[#e8e7e5] flex flex-col items-center justify-center gap-[2px]"><i class="w-[5px] h-px bg-[#aaa]"></i><i class="w-[5px] h-px bg-[#aaa]"></i><i class="w-[5px] h-px bg-[#aaa]"></i></span>
          <button aria-label="Défiler vers le bas" class="h-[13px] rounded-b-full bg-[#f2f1f0] flex items-center justify-center"><svg class="w-[7px] h-1" viewBox="0 0 7 4"><path d="M0 0l3.500 4L7 0z" fill="#777"/></svg></button>
        </div>
        <aside class="w-2 shrink-0 border-l-2 border-t-2 border-b border-[#2f2f2f] relative">
          <button aria-label="Volet latéral" class="absolute -left-[2px] right-0 top-[282px] h-[73px] bg-[#8f8e8c] flex items-center justify-center"><svg class="w-[6px] h-2" viewBox="0 0 6 8"><path d="M5 0v8L1 4z" fill="#fff"/></svg></button>
        </aside>
      </div>

      <!-- Status bar -->
      <footer class="h-5 shrink-0 flex items-center text-[12px] leading-5 [&>*]:border-r [&>*]:border-[#c4c3c1] [&>*]:h-4 [&>*]:leading-4 [&>*]:shrink-0 text-[#4a4a4a]">
        <span class="w-[221px] pl-[10px]">Page 21 de 82 (Page 23)</span>
        <span class="w-[198px] pl-2">0 mots, 0 caractères</span>
        <span class="w-[167px] pl-2">Style par défaut</span>
        <span class="w-[177px] text-center">Français (France)</span>
        <span class="w-[68px]"></span>
        <span class="w-[29px] flex items-center justify-center"><svg class="w-4 h-4" viewBox="0 0 16 16" fill="none" stroke="#444"><path d="M1 3.500h5M1 12.500h5M3.500 3.500v9" /><path d="M8.500 10v2.500h6V10"/></svg></span>
        <span class="w-[29px] flex items-center justify-center"><svg class="w-3 h-3" viewBox="0 0 12 12" fill="none" stroke="#aaa"><path d="M1.500 1.500h7l2 2v7h-9zM3.500 1.500v3h5v-3M3.500 10V7.500h5V10"/></svg></span>
        <span class="w-[29px]"></span>
        <span class="flex-1"></span>
        <span class="w-[76px] flex items-center gap-[6px] pl-3 *:shrink-0">
          <button aria-label="Une page"><svg class="w-2 h-3" viewBox="0 0 8 12"><path d="M.500 1.500h4l3 3v6h-7zM4.500 1.500v3h3" fill="#fff" stroke="#1e90e8"/></svg></button>
          <button aria-label="Plusieurs pages"><svg class="w-[18px] h-3" viewBox="0 0 18 12" fill="none" stroke="#b0afad"><path d="M.500 1.500h4l3 3v6h-7zM4.500 1.500v3h3M10.500 1.500h4l3 3v6h-7zM14.500 1.500v3h3"/></svg></button>
          <button aria-label="Vue livre"><svg class="w-4 h-3" viewBox="0 0 16 12" fill="none" stroke="#b0afad"><path d="M8 10.500H.500v-6l3-3H8zM3.500 1.500v3h-3M8 10.500h7.500v-6l-3-3H8zM12.500 1.500v3h3"/></svg></button>
        </span>
        <span class="w-[143px] flex items-center justify-between pl-[10px] pr-2">
          <button aria-label="Zoom arrière"><svg class="w-2 h-2" viewBox="0 0 8 8"><path d="M0 4.500h7" stroke="#444"/></svg></button>
          <span class="relative flex items-center">
            <i class="absolute left-[19px] h-[10px] w-[2px] bg-[#333]"></i><i class="absolute left-12 h-[10px] w-[2px] bg-[#333]"></i>
            <input type="range" aria-label="Zoom" min="0" max="100" value="29" class="relative appearance-none block w-[97px] h-[2px] bg-[#333] [&::-webkit-slider-thumb]:appearance-none [&::-webkit-slider-thumb]:size-2 [&::-webkit-slider-thumb]:rounded-full [&::-webkit-slider-thumb]:border [&::-webkit-slider-thumb]:border-[#444] [&::-webkit-slider-thumb]:bg-[#f2f1f0]">
          </span>
          <button aria-label="Zoom avant"><svg class="w-2 h-2" viewBox="0 0 8 8"><path d="M0 4.500h7M3.500 1v7" stroke="#444"/></svg></button>
        </span>
        <span class="w-11 pl-[7px] border-r-0!">70 %</span>
      </footer>
    </main>
  </div>
</body>
</html>
